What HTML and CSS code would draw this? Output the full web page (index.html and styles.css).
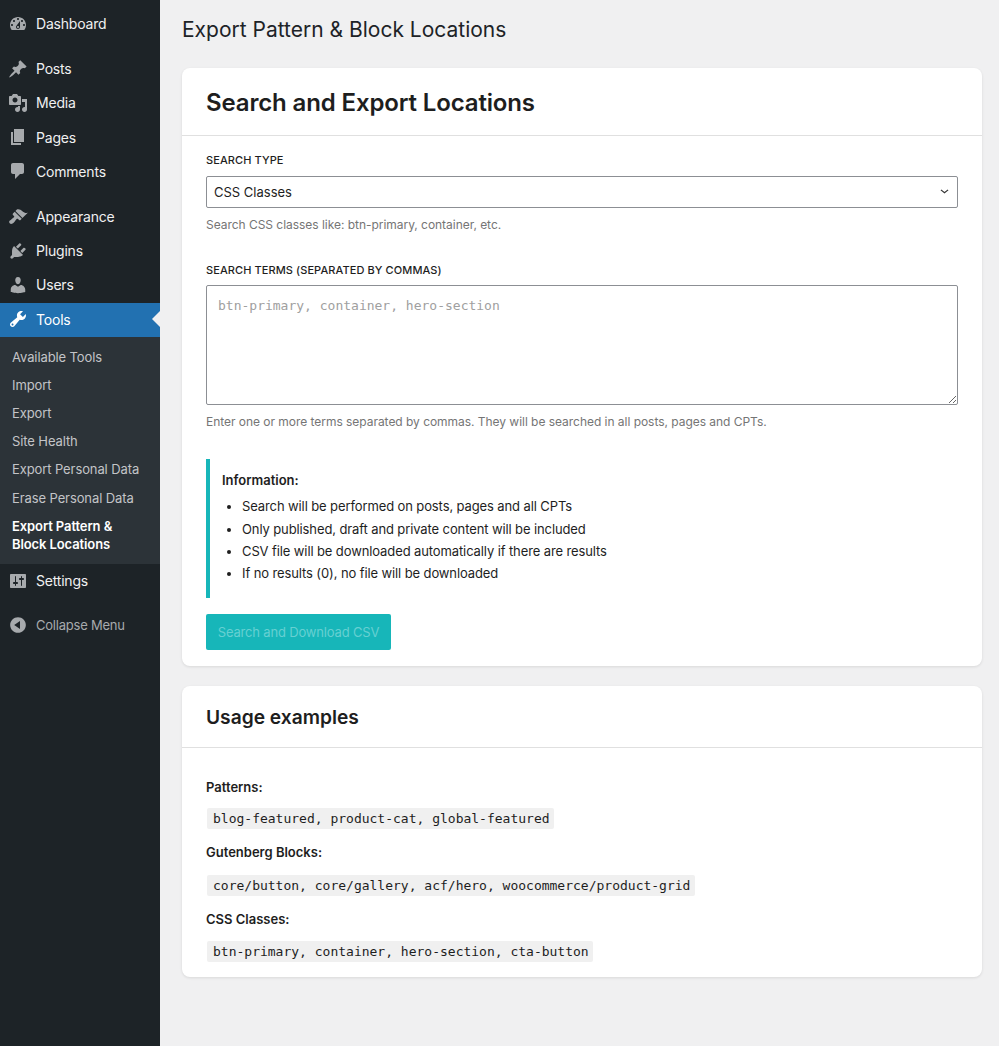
FILE: index.html
```html
<!DOCTYPE html>
<html lang="en">
<head>
    <meta charset="UTF-8">
    <meta name="viewport" content="width=device-width, initial-scale=1.0">
    <title>Export Pattern &amp; Block Locations</title>
    <link rel="stylesheet" href="styles.css">
</head>
<body>

    <!-- Admin sidebar -->
    <nav class="sidebar">
        <a class="menu-item"><svg class="menu-icon" viewBox="0 0 20 20"><path fill-rule="evenodd" d="M3.76 16h12.48c1.1-1.37 1.76-3.11 1.76-5 0-4.42-3.58-8-8-8s-8 3.58-8 8c0 1.89.66 3.63 1.76 5zM10 4c.55 0 1 .45 1 1s-.45 1-1 1-1-.45-1-1 .45-1 1-1zM6 6c.55 0 1 .45 1 1s-.45 1-1 1-1-.45-1-1 .45-1 1-1zm8 0c.55 0 1 .45 1 1s-.45 1-1 1-1-.45-1-1 .45-1 1-1zm-5.37 5.55L12 7v6c0 1.1-.9 2-2 2s-2-.9-2-2c0-.57.24-1.08.63-1.45zM4 10c.55 0 1 .45 1 1s-.45 1-1 1-1-.45-1-1 .45-1 1-1zm12 0c.55 0 1 .45 1 1s-.45 1-1 1-1-.45-1-1 .45-1 1-1zm-5 3c0-.55-.45-1-1-1s-1 .45-1 1 .45 1 1 1 1-.45 1-1z"/></svg>Dashboard</a>
        <div class="menu-sep"></div>
        <a class="menu-item"><svg class="menu-icon" viewBox="0 0 20 20"><path d="M10.44 3.02l1.82-1.82 6.36 6.35-1.83 1.82c-1.05-.68-2.48-.57-3.41.36l-.75.75c-.92.93-1.04 2.35-.35 3.41l-1.83 1.82-2.41-2.41-2.8 2.79c-.42.42-3.38 2.71-3.8 2.29s1.86-3.39 2.28-3.81l2.79-2.79L4.1 9.36l1.83-1.82c1.05.69 2.48.57 3.4-.36l.75-.75c.93-.92 1.05-2.35.36-3.41z"/></svg>Posts</a>
        <a class="menu-item"><svg class="menu-icon" viewBox="0 0 20 20"><path fill-rule="evenodd" d="M13 11V4c0-.55-.45-1-1-1h-1.67L9 1H5L3.67 3H2c-.55 0-1 .45-1 1v7c0 .55.45 1 1 1h10c.55 0 1-.45 1-1zM7 4.5c1.38 0 2.5 1.12 2.5 2.5S8.38 9.5 7 9.5 4.5 8.38 4.5 7 5.62 4.5 7 4.5zM14 6h5v10.5c0 1.38-1.12 2.5-2.5 2.5S14 17.88 14 16.5s1.12-2.5 2.5-2.5c.17 0 .34.02.5.05V9h-3V6zm-4 8.05V13h2v3.5c0 1.38-1.12 2.5-2.5 2.5S7 17.88 7 16.5 8.12 14 9.5 14c.17 0 .34.02.5.05z"/></svg>Media</a>
        <a class="menu-item"><svg class="menu-icon" viewBox="0 0 20 20"><path d="M6 15V2h10v13H6zm-1 1h8v2H3V5h2v11z"/></svg>Pages</a>
        <a class="menu-item"><svg class="menu-icon" viewBox="0 0 20 20"><path d="M5 2h9c1.1 0 2 .9 2 2v7c0 1.1-.9 2-2 2h-2l-5 5v-5H5c-1.1 0-2-.9-2-2V4c0-1.1.9-2 2-2z"/></svg>Comments</a>
        <div class="menu-sep"></div>
        <a class="menu-item"><svg class="menu-icon" viewBox="0 0 20 20"><path d="M14.48 11.06L7.41 3.99l1.5-1.5c.5-.56 2.3-.47 3.51.32 1.21.8 1.43 1.28 2.91 2.1 1.18.64 2.45 1.26 4.45.85zm-.71.71L6.7 4.7 4.93 6.47c-.39.39-.39 1.02 0 1.41l1.06 1.06c.39.39.39 1.03 0 1.42-.6.6-1.43 1.11-2.21 1.69-.35.26-.7.53-1.01.84C1.43 13.23.4 14.98 1.72 16.3s3.02.29 4.37-1.07c.31-.31.58-.66.84-1.01.58-.78 1.09-1.61 1.69-2.21.39-.39 1.02-.39 1.41 0l1.06 1.06c.39.39 1.02.39 1.41 0z"/></svg>Appearance</a>
        <a class="menu-item"><svg class="menu-icon" viewBox="0 0 20 20"><path d="M13.11 4.36L9.87 7.6 8 5.73l3.24-3.24c.35-.34 1.05-.2 1.56.32.52.51.66 1.21.31 1.55zm-8 1.77l.91-1.12 9.01 9.01-1.19.84c-.71.71-2.63 1.16-3.82 1.16H6.14L4.9 17.26c-.59.59-1.54.59-2.12 0-.59-.58-.59-1.53 0-2.12l1.24-1.24v-3.88c0-1.13.4-3.19 1.09-3.89zm7.26 3.97l3.24-3.24c.34-.35 1.04-.21 1.55.31.52.51.66 1.21.31 1.55l-3.24 3.25z"/></svg>Plugins</a>
        <a class="menu-item"><svg class="menu-icon" viewBox="0 0 20 20"><path d="M10 9.25c-2.27 0-2.73-3.44-2.73-3.44C7 4.02 7.82 2 9.97 2c2.16 0 2.98 2.02 2.71 3.81 0 0-.41 3.44-2.68 3.44zm0 2.57L12.72 10c2.39 0 4.52 2.33 4.52 4.53v2.49s-3.65 1.13-7.24 1.13c-3.65 0-7.24-1.13-7.24-1.13v-2.49c0-2.25 1.94-4.48 4.47-4.48z"/></svg>Users</a>
        <a class="menu-item menu-current"><svg class="menu-icon" viewBox="0 0 20 20"><path fill-rule="evenodd" d="M16.68 9.77c-1.34 1.34-3.3 1.67-4.95.99l-5.41 6.52c-.99.99-2.59.99-3.58 0s-.99-2.59 0-3.57l6.52-5.42c-.68-1.65-.35-3.61.99-4.95 1.28-1.28 3.12-1.62 4.72-1.06l-2.89 2.89 2.82 2.82 2.86-2.87c.53 1.58.18 3.39-1.08 4.65zM3.81 16.21c.4.39 1.04.39 1.43 0 .4-.4.4-1.04 0-1.43-.39-.4-1.03-.4-1.43 0-.39.39-.39 1.03 0 1.43z"/></svg>Tools<span class="menu-arrow"></span></a>
        <ul class="submenu">
            <li>Available Tools</li>
            <li>Import</li>
            <li>Export</li>
            <li>Site Health</li>
            <li>Export Personal Data</li>
            <li>Erase Personal Data</li>
            <li class="submenu-current">Export Pattern &amp; Block Locations</li>
        </ul>
        <a class="menu-item"><svg class="menu-icon" viewBox="0 0 20 20"><path fill-rule="evenodd" d="M18 16V4c0-.55-.45-1-1-1H3c-.55 0-1 .45-1 1v12c0 .55.45 1 1 1h14c.55 0 1-.45 1-1zM8 11h1c.55 0 1 .45 1 1s-.45 1-1 1H8v1.5c0 .28-.22.5-.5.5s-.5-.22-.5-.5V13H6c-.55 0-1-.45-1-1s.45-1 1-1h1V5.5c0-.28.22-.5.5-.5s.5.22.5.5V11zm5-2h-1c-.55 0-1-.45-1-1s.45-1 1-1h1V5.5c0-.28.22-.5.5-.5s.5.22.5.5V7h1c.55 0 1 .45 1 1s-.45 1-1 1h-1v5.5c0 .28-.22.5-.5.5s-.5-.22-.5-.5V9z"/></svg>Settings</a>
        <a class="menu-collapse"><svg class="menu-icon" viewBox="0 0 20 20"><path fill-rule="evenodd" d="M10 2.16c4.33 0 7.84 3.51 7.84 7.84s-3.51 7.84-7.84 7.84S2.16 14.33 2.16 10 5.71 2.16 10 2.16zm2 11.72V6.12L6.18 9.97z"/></svg>Collapse Menu</a>
    </nav>

    <main class="content">
        <h1 class="page-title">Export Pattern &amp; Block Locations</h1>

        <section class="card">
            <div class="card-header card-header-large">
                <h2 class="card-title-large">Search and Export Locations</h2>
            </div>
            <div class="card-body">
                <div class="form-group">
                    <label class="field-label" for="searchType">Search type</label>
                    <select class="field-select" id="searchType">
                        <option>CSS Classes</option>
                    </select>
                    <p class="field-help">Search CSS classes like: btn-primary, container, etc.</p>
                </div>

                <div class="form-group">
                    <label class="field-label" for="searchTerms">Search terms (separated by commas)</label>
                    <textarea class="field-textarea" id="searchTerms" placeholder="btn-primary, container, hero-section"></textarea>
                    <p class="field-help">Enter one or more terms separated by commas. They will be searched in all posts, pages and CPTs.</p>
                </div>

                <div class="info-box">
                    <p class="info-title">Information:</p>
                    <ul class="info-list">
                        <li>Search will be performed on posts, pages and all CPTs</li>
                        <li>Only published, draft and private content will be included</li>
                        <li>CSV file will be downloaded automatically if there are results</li>
                        <li>If no results (0), no file will be downloaded</li>
                    </ul>
                </div>

                <button class="search-button" disabled>Search and Download CSV</button>
            </div>
        </section>

        <section class="card">
            <div class="card-header">
                <h2 class="card-title">Usage examples</h2>
            </div>
            <div class="card-body examples">
                <p class="example-label">Patterns:</p>
                <p class="example-line"><code>blog-featured, product-cat, global-featured</code></p>
                <p class="example-label">Gutenberg Blocks:</p>
                <p class="example-line example-line-wide"><code>core/button, core/gallery, acf/hero, woocommerce/product-grid</code></p>
                <p class="example-label">CSS Classes:</p>
                <p class="example-line example-line-last"><code>btn-primary, container, hero-section, cta-button</code></p>
            </div>
        </section>
    </main>

</body>
</html>
```

FILE: styles.css
```css
* {
    box-sizing: border-box;
}

body {
    font-family: Inter, "Noto Sans", sans-serif;
    background-color: #f0f0f1;
    color: #1e1e1e;
    margin: 0;
    padding: 0;
    display: flex;
    min-height: 1046px;
}

/* Sidebar */
.sidebar {
    width: 160px;
    flex-shrink: 0;
    background-color: #1d2327;
    padding-top: 7px;
}

.menu-item {
    display: flex;
    align-items: center;
    height: 34.2px;
    padding: 0 0 1px 8px;
    color: #f0f0f1;
    font-size: 14px;
    letter-spacing: -0.2px;
}

.menu-icon {
    width: 20px;
    height: 20px;
    margin-right: 8px;
    fill: #a7aaad;
    flex-shrink: 0;
}

.menu-sep {
    height: 11px;
}

.menu-current {
    background-color: #2271b1;
    color: #fff;
}

.menu-current .menu-icon {
    fill: #fff;
}

.menu-arrow {
    margin-left: auto;
    border: 8px solid transparent;
    border-left: 0;
    border-right-color: #f0f0f1;
}

.submenu {
    list-style: none;
    margin: 0;
    padding: 5.9px 0 6.5px;
    background-color: #2c3338;
    color: #c3c4c7;
    font-size: 13px;
    line-height: 18px;
    letter-spacing: -0.1px;
}

.submenu li {
    padding: 5px 12px;
    height: 28.2px;
}

.submenu .submenu-current {
    color: #fff;
    font-weight: 600;
    height: auto;
}

.menu-collapse {
    display: flex;
    align-items: center;
    height: 34px;
    margin-top: 10px;
    padding-left: 8px;
    color: #a7aaad;
    font-size: 13px;
    letter-spacing: -0.22px;
}

/* Main column */
.content {
    flex: 1;
    padding: 0 17px 0 22px;
}

.page-title {
    font-size: 21px;
    font-weight: 400;
    line-height: 28px;
    margin: 16px 0 24px;
    color: #1d2327;
}

.card {
    background-color: #fff;
    border-radius: 8px;
    box-shadow: 0 1px 3px rgba(0, 0, 0, 0.1);
    margin-bottom: 20px;
}

.card-header {
    padding: 0 24px;
    height: 62px;
    display: flex;
    align-items: center;
    border-bottom: 1px solid #e0e0e0;
}

.card-header-large {
    height: 68px;
    padding-top: 2px;
}

.card-title-large {
    font-size: 24px;
    font-weight: 600;
    letter-spacing: -0.14px;
    margin: 0;
}

.card-title {
    font-size: 19.2px;
    font-weight: 600;
    margin: 0;
}

.card-body {
    padding: 16px 24px;
}

.form-group {
    margin-bottom: 29px;
}

.field-label {
    display: block;
    font-size: 11px;
    font-weight: 450;
    line-height: 16px;
    letter-spacing: 0.09px;
    text-transform: uppercase;
    margin-bottom: 8px;
}

.form-group + .form-group .field-label {
    margin-bottom: 7px;
}

.field-select {
    display: block;
    width: 100%;
    height: 32px;
    padding: 0 24px 0 7px;
    font-family: inherit;
    font-size: 13px;
    color: #1e1e1e;
    background: #fff url("data:image/svg+xml,%3Csvg xmlns='http://www.w3.org/2000/svg' viewBox='0 0 10 6'%3E%3Cpath d='M1 1l4 3.5L9 1' fill='none' stroke='%23333' stroke-width='1.3'/%3E%3C/svg%3E") no-repeat right 8px center / 9px 5.4px;
    border: 1px solid #8c8f94;
    border-radius: 2px;
    appearance: none;
}

.field-textarea {
    display: block;
    width: 100%;
    height: 120px;
    padding: 12px 11px;
    font-family: "DejaVu Sans Mono", monospace;
    font-size: 13px;
    border: 1px solid #8c8f94;
    border-radius: 2px;
}

.field-textarea::placeholder {
    color: #a0a0a0;
}

.field-help {
    margin: 9px 0 0;
    font-size: 12px;
    line-height: 16px;
    letter-spacing: -0.035px;
    color: #757575;
}

.info-box {
    border-left: 4px solid #17b6b9;
    padding: 12px 12px 11.6px 12px;
    margin-top: 28px;
    font-size: 13px;
}

.info-title {
    margin: 0 0 8.4px;
    font-weight: 600;
    line-height: 18px;
}

.info-list {
    margin: 0;
    padding-left: 20px;
    line-height: 18px;
    letter-spacing: -0.11px;
}

.info-list li {
    margin-bottom: 4.3px;
}

.search-button {
    display: block;
    margin-top: 16px;
    width: 185px;
    height: 36px;
    border: none;
    border-radius: 2px;
    background-color: #17b6b9;
    color: #66d0d2;
    font-family: inherit;
    font-size: 13px;
    letter-spacing: -0.17px;
}

.examples {
    padding: 30px 24px 15px;
}

.example-label {
    margin: 0;
    font-size: 13px;
    font-weight: 600;
    line-height: 18px;
}

.example-line {
    margin: 11px 0 14px;
    line-height: 20px;
}

.example-line-wide {
    margin-top: 13px;
}

.example-line-last {
    margin: 12px 0 0;
}

code {
    font-family: "DejaVu Sans Mono", monospace;
    font-size: 13px;
    background-color: #f0f0f0;
    border-radius: 2px;
    margin-left: 1px;
    padding: 3px 4.5px 3px 6px;
}
```
